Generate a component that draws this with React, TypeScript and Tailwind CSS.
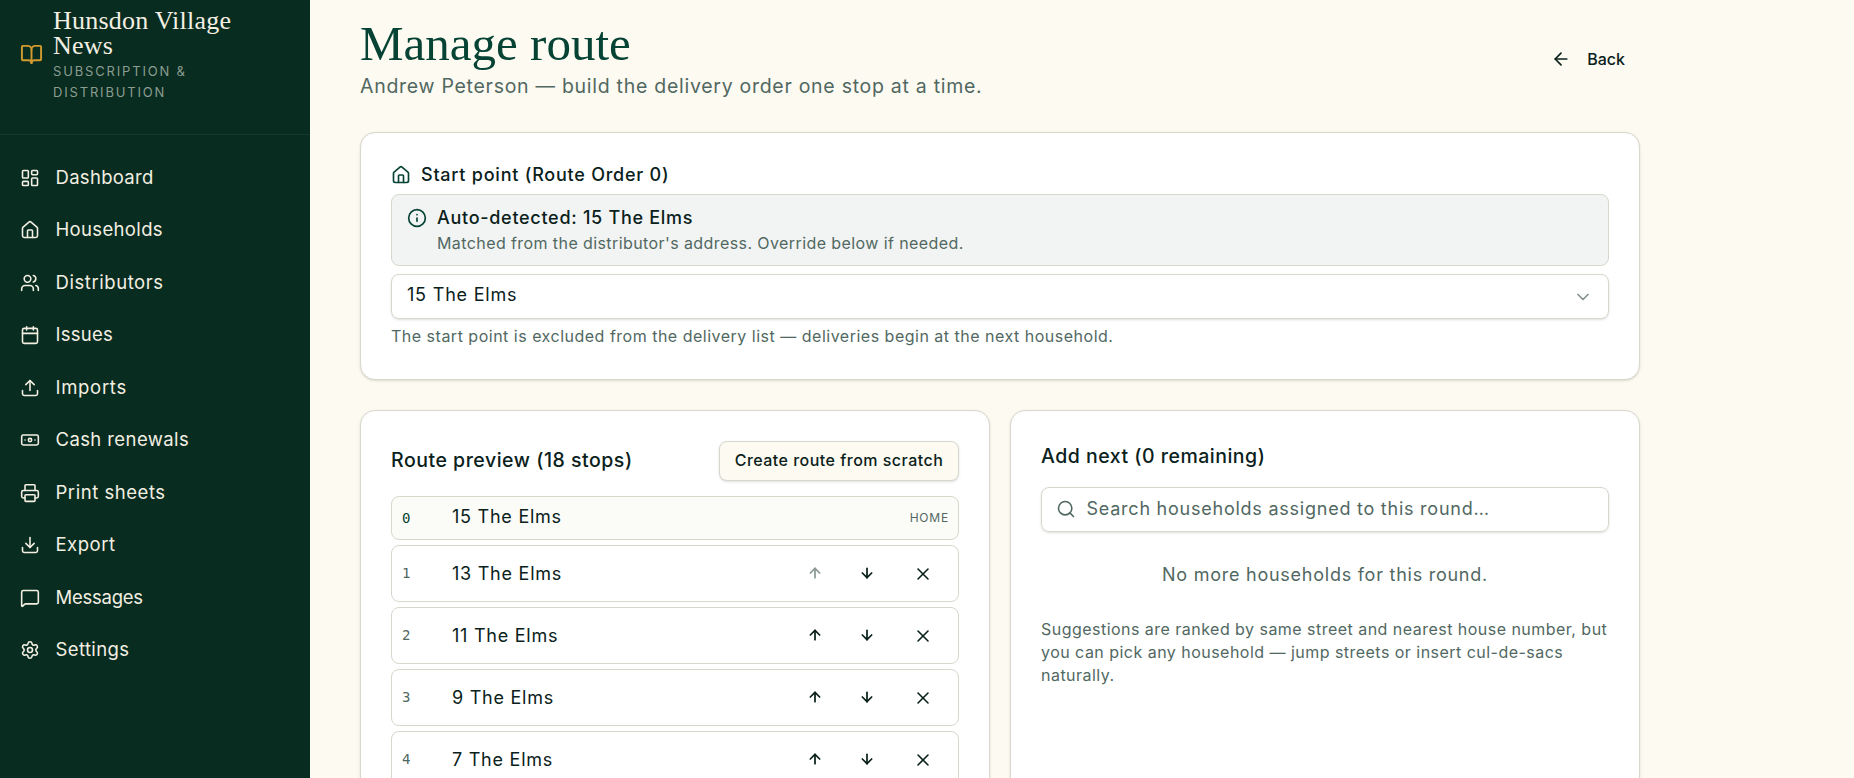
import {
  ArrowDown, ArrowLeft, ArrowUp, Banknote, BookOpen, Calendar, ChevronDown, Download, House, Info,
  LayoutDashboard, MessageSquare, Printer, Search, Settings, Upload, Users, X,
} from "lucide-react";

const nav = [
  { label: "Dashboard", Icon: LayoutDashboard, track: "tracking-[0.3px]" },
  { label: "Households", Icon: House, track: "tracking-[0.35px]" },
  { label: "Distributors", Icon: Users, track: "tracking-[0.56px]" },
  { label: "Issues", Icon: Calendar, track: "tracking-[0.25px]" },
  { label: "Imports", Icon: Upload, track: "tracking-[0.7px]" },
  { label: "Cash renewals", Icon: Banknote, track: "tracking-[0.4px]" },
  { label: "Print sheets", Icon: Printer, track: "tracking-[0.54px]" },
  { label: "Export", Icon: Download, track: "tracking-[0.5px]" },
  { label: "Messages", Icon: MessageSquare, track: "tracking-[-0.25px]" },
  { label: "Settings", Icon: Settings, track: "tracking-[0.38px]" },
];

const stops = ["13 The Elms", "11 The Elms", "9 The Elms", "7 The Elms"];

const card = "rounded-[15px] border border-[#d6d8cb] bg-white p-[30px] shadow-sm";

function StopRow({ order, name, first }: { order: number; name: string; first: boolean }) {
  return (
    <li className="mt-[5px] flex h-[57px] items-center rounded-[8px] border border-[#d6d8cb] pl-[10px] pr-[5px]">
      <span className="w-[50px] font-['DejaVu_Sans_Mono',monospace] text-[14px] text-[#516862]">{order}</span>
      <span className="-mt-px text-[18px] tracking-[0.75px]">{name}</span>
      <button className={first ? "ml-auto flex w-[52px] justify-center text-[#8b9994]" : "ml-auto flex w-[52px] justify-center"}>
        <ArrowUp className="-mt-px size-[16px]" strokeWidth={2.6} />
      </button>
      <button className="flex w-[52px] justify-center">
        <ArrowDown className="-mt-px size-[16px]" strokeWidth={2.6} />
      </button>
      <button className="flex w-[60px] justify-center">
        <X className="size-[20px]" strokeWidth={1.9} />
      </button>
    </li>
  );
}

export default function App() {
  return (
    <div className="flex h-[778px] overflow-hidden bg-[#fdfaf1] font-['Inter',sans-serif] text-[#0a211b]">
      <aside className="w-[310px] shrink-0 bg-[#082c20] text-[#f3efe2]">
        <div className="flex h-[135px] items-start border-b border-[#183a2e] pl-[19.5px] pt-[8px]">
          <BookOpen className="mt-[34.5px] size-[23px] shrink-0 text-[#d29a2f]" strokeWidth={2} />
          <div className="ml-[10.5px]">
            <div className="w-[190px] font-['Liberation_Serif',serif] text-[26px] leading-[25px] tracking-[0.22px]">Hunsdon Village News</div>
            <div className="mt-[3px] w-[170px] text-[13px] leading-[21px] tracking-[1.83px] text-[#8b9c90]">SUBSCRIPTION &amp; DISTRIBUTION</div>
          </div>
        </div>
        <nav className="pt-[16.5px]">
          {nav.map(({ label, Icon, track }) => (
            <a key={label} className="flex h-[52.5px] items-center pl-[20px] text-[18.5px]">
              <Icon className="size-[20px]" strokeWidth={1.9} />
              <span className={`ml-[15.5px] ${track}`}>{label}</span>
            </a>
          ))}
        </nav>
      </aside>
      <main className="w-[1330px] shrink-0 pl-[50px] pt-[19px]">
        <header className="flex h-[113px] items-start justify-between pr-[15px]">
          <div>
            <h1 className="font-['Liberation_Serif',serif] text-[49px] leading-[50px] text-[#064334]">Manage route</h1>
            <p className="mt-[3px] text-[19.5px] leading-[28px] tracking-[0.72px] text-[#516862]">Andrew Peterson — build the delivery order one stop at a time.</p>
          </div>
          <button className="mt-[19.5px] flex h-[40px] items-center text-[16px] font-medium">
            <ArrowLeft className="mr-[16px] size-[20px]" strokeWidth={2} />
            <span>Back</span>
          </button>
        </header>
        <section className={`h-[248px] ${card}`}>
          <div className="flex h-[25px] items-center text-[18px] font-medium">
            <House className="-mt-px mr-[10px] size-[20px] text-[#064334]" strokeWidth={2} />
            <span className="-mt-[2px] tracking-[0.76px]">Start point (Route Order 0)</span>
          </div>
          <div className="mt-[6px] flex h-[72px] rounded-[8px] border border-[#d6d8cb] bg-[#f2f4f3] pl-[15px] pt-[11px]">
            <Info className="mr-[10px] mt-[2px] size-[20px] text-[#064334]" strokeWidth={2} />
            <div>
              <div className="text-[18px] font-medium leading-[24px] tracking-[0.71px]">Auto-detected: 15 The Elms</div>
              <div className="text-[16px] leading-[27px] tracking-[0.41px] text-[#516862]">Matched from the distributor's address. Override below if needed.</div>
            </div>
          </div>
          <div className="mt-[8px] flex h-[45px] items-center justify-between rounded-[8px] border border-[#d6d8cb] px-[15px] text-[18px] shadow-sm">
            <span className="-mt-[4px] tracking-[0.8px]">15 The Elms</span>
            <ChevronDown className="size-[20px] text-[#84928d]" strokeWidth={2} />
          </div>
          <p className="mt-[6px] text-[16px] leading-[22px] tracking-[0.5px] text-[#516862]">The start point is excluded from the delivery list — deliveries begin at the next household.</p>
        </section>
        <div className="mt-[30px] grid grid-cols-2 gap-[20px]">
          <section className={`h-[500px] ${card}`}>
            <div className="flex h-[40px] items-center justify-between">
              <h2 className="text-[19.5px] font-medium tracking-[0.52px]">Route preview (18 stops)</h2>
              <button className="h-[40px] w-[240px] rounded-[8px] border border-[#d6d8cb] bg-[#fdfaf1] pb-[3px] text-[16px] font-medium tracking-[0.48px] shadow-sm">Create route from scratch</button>
            </div>
            <ol>
              <li className="mt-[15px] flex h-[44px] items-center rounded-[8px] border border-[#d6d8cb] bg-[#fbfbf7] px-[10px]">
                <span className="w-[50px] font-['DejaVu_Sans_Mono',monospace] text-[14px] text-[#064334]">0</span>
                <span className="-mt-[4px] text-[18px] tracking-[0.75px]">15 The Elms</span>
                <span className="-mr-px ml-auto text-[12px] tracking-[0.8px] text-[#516862]">HOME</span>
              </li>
              {stops.map((name, i) => (
                <StopRow key={name} order={i + 1} name={name} first={i === 0} />
              ))}
            </ol>
          </section>
          <section className={`h-[500px] ${card}`}>
            <h2 className="text-[19.5px] font-medium leading-[30px] tracking-[0.5px]">Add next (0 remaining)</h2>
            <div className="mt-[16px] flex h-[45px] items-center rounded-[8px] border border-[#d6d8cb] pl-[14px] text-[18px] text-[#516862] shadow-sm">
              <Search className="-mt-px mr-[10.5px] size-[20px]" strokeWidth={1.9} />
              <span className="-mt-[3px] tracking-[0.76px]">Search households assigned to this round…</span>
            </div>
            <p className="mt-[29px] text-center text-[18px] leading-[28px] tracking-[0.75px] text-[#516862]">No more households for this round.</p>
            <p className="mt-[29px] whitespace-nowrap text-[16px] leading-[22.75px] tracking-[0.47px] text-[#516862]">
              Suggestions are ranked by same street and nearest house number, but<br />
              you can pick any household — jump streets or insert cul-de-sacs<br />
              naturally.
            </p>
          </section>
        </div>
      </main>
    </div>
  );
}
